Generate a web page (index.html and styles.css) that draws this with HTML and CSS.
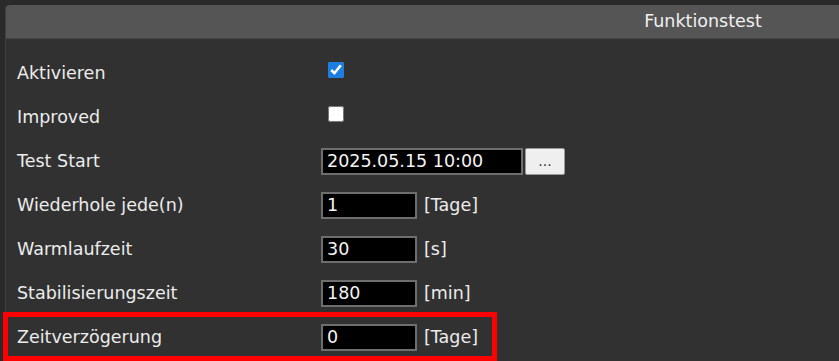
FILE: index.html
```html
<!DOCTYPE html>
<html lang="de">
<head>
    <meta charset="UTF-8">
    <meta name="viewport" content="width=device-width, initial-scale=1.0">
    <title>Funktionstest</title>
    <link rel="stylesheet" href="styles.css">
</head>
<body>
    <div class="panel">
        <div class="panel-header">Funktionstest</div>
        <div class="panel-body">
            <div class="row">
                <label class="label" for="active">Aktivieren</label>
                <div class="field"><input type="checkbox" id="active" checked></div>
            </div>
            <div class="row">
                <label class="label" for="improved">Improved</label>
                <div class="field"><input type="checkbox" id="improved"></div>
            </div>
            <div class="row">
                <label class="label" for="start">Test Start</label>
                <div class="field">
                    <input type="text" id="start" class="input input-date" value="2025.05.15 10:00">
                    <button class="btn-pick">...</button>
                </div>
            </div>
            <div class="row">
                <label class="label" for="repeat">Wiederhole jede(n)</label>
                <div class="field">
                    <input type="text" id="repeat" class="input" value="1">
                    <span class="unit">[Tage]</span>
                </div>
            </div>
            <div class="row">
                <label class="label" for="warmup">Warmlaufzeit</label>
                <div class="field">
                    <input type="text" id="warmup" class="input" value="30">
                    <span class="unit">[s]</span>
                </div>
            </div>
            <div class="row">
                <label class="label" for="stab">Stabilisierungszeit</label>
                <div class="field">
                    <input type="text" id="stab" class="input" value="180">
                    <span class="unit">[min]</span>
                </div>
            </div>
            <div class="row highlighted">
                <label class="label" for="delay">Zeitverzögerung</label>
                <div class="field">
                    <input type="text" id="delay" class="input" value="0">
                    <span class="unit">[Tage]</span>
                </div>
            </div>
        </div>
    </div>
</body>
</html>
```

FILE: styles.css
```css
* {
    margin: 0;
    padding: 0;
    box-sizing: border-box;
}

body {
    font-family: 'DejaVu Sans', Verdana, sans-serif;
    font-size: 17.5px;
    background: #2a2a2a;
    color: #ececec;
    overflow: hidden;
    padding: 5px 0 0 5px;
    height: 361px;
}

.panel {
    width: 1395px;
    background: #313131;
    border-left: 1px solid #3d3d3d;
    border-radius: 4px 4px 0 0;
    min-height: 400px;
}

.panel-header {
    background: #555555;
    height: 34px;
    border-bottom: 1px solid #454545;
    border-radius: 4px 4px 0 0;
    text-align: center;
    line-height: 32px;
    color: #f0f0f0;
}

.panel-body {
    padding-top: 12px;
}

.row {
    display: flex;
    align-items: center;
    height: 44px;
    position: relative;
}

.label {
    width: 315px;
    padding-left: 11px;
}

.field {
    display: flex;
    align-items: center;
}

input[type="checkbox"] {
    width: 16px;
    height: 16px;
    margin: -7px 0 0 7px;
    accent-color: #1c7ee0;
}

.input {
    width: 96px;
    height: 27px;
    background: #000;
    color: #f4f4f4;
    border: 2px solid #6e6e6e;
    font-family: inherit;
    font-size: 17.5px;
    padding: 0 4px;
    outline: none;
}

.input-date {
    width: 202px;
}

.btn-pick {
    width: 40px;
    height: 27px;
    margin-left: 2px;
    background: #efefef;
    border: 1px solid #9a9a9a;
    border-radius: 2px;
    color: #333;
    font-family: inherit;
    font-size: 14px;
}

.unit {
    margin-left: 7px;
}

.highlighted::after {
    content: "";
    box-sizing: border-box;
    position: absolute;
    left: -3px;
    top: -3px;
    width: 494px;
    height: 49px;
    border: 5px solid #ff0000;
}
```
